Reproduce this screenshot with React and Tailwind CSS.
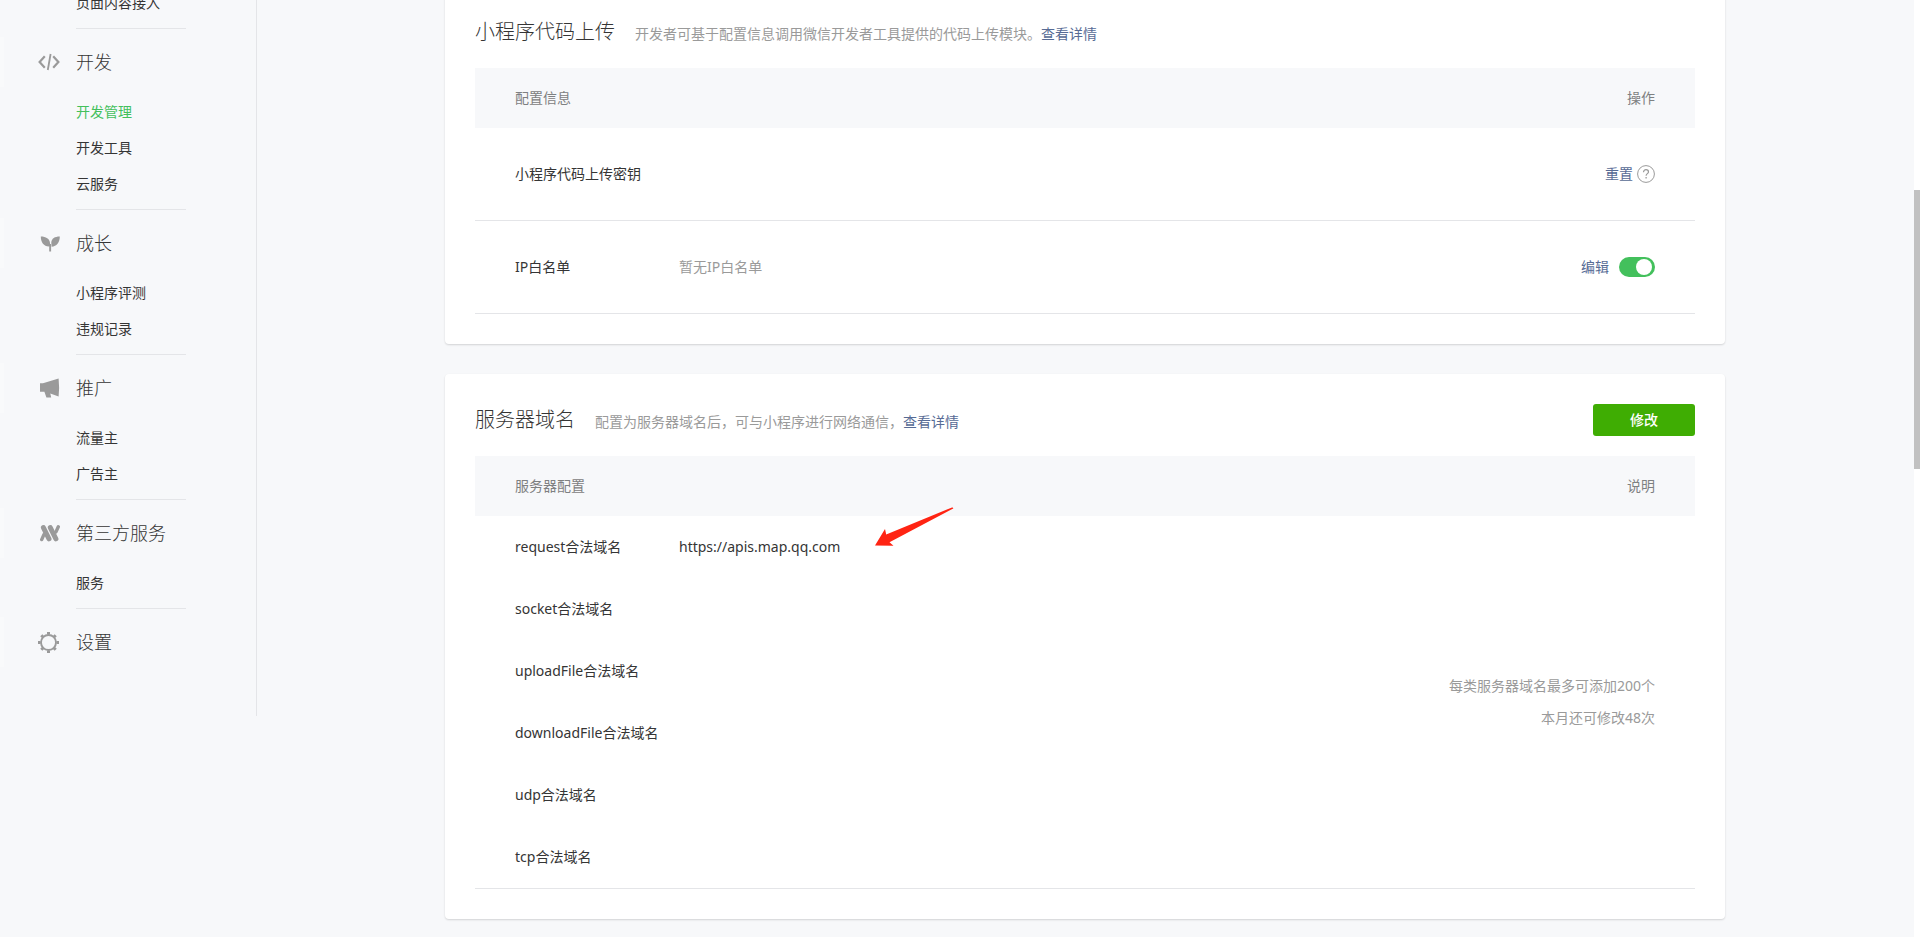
import React, { useState } from 'react';

const MENU = [
  {
    title: '开发',
    icon: CodeIcon,
    items: ['开发管理', '开发工具', '云服务'],
  },
  {
    title: '成长',
    icon: SproutIcon,
    items: ['小程序评测', '违规记录'],
  },
  {
    title: '推广',
    icon: MegaphoneIcon,
    items: ['流量主', '广告主'],
  },
  {
    title: '第三方服务',
    icon: ServiceIcon,
    items: ['服务'],
  },
  {
    title: '设置',
    icon: GearIcon,
    items: [],
  },
];

const DOMAINS = [
  { label: 'request合法域名', value: 'https://apis.map.qq.com' },
  { label: 'socket合法域名', value: '' },
  { label: 'uploadFile合法域名', value: '' },
  { label: 'downloadFile合法域名', value: '' },
  { label: 'udp合法域名', value: '' },
  { label: 'tcp合法域名', value: '' },
];

function CodeIcon() {
  return (
    <svg width="22" height="22" viewBox="0 0 22 22" fill="none" stroke="#9a9a9a" strokeWidth="2.2" aria-hidden="true">
      <path d="M6.8 5.2 1.600 11l5.2 5.8M15.2 5.2l5.2 5.8-5.2 5.8" />
      <path strokeWidth="1.800" d="M12.6 3 9.8 19" />
    </svg>
  );
}

function SproutIcon() {
  return (
    <svg width="22" height="22" viewBox="0 0 22 22" fill="#9a9a9a" aria-hidden="true">
      <path d="M2.8 4.500c5 0 9 2.200 9.200 6.500l.2 3.300C6.500 15.100 2.800 11 2.800 4.500z" />
      <path d="M21.800 4.500c-5 0-8.300 2-8.500 6l.3 4.200c5-.2 8.200-4.200 8.200-10.200z" />
      <path d="M11.200 12h1.900v7.500h-1.900z" />
    </svg>
  );
}

function MegaphoneIcon() {
  return (
    <svg width="22" height="22" viewBox="0 0 22 22" fill="#9a9a9a" aria-hidden="true">
      <path d="M2 6.200h3L20.600 1.600q1 9 0 18l-8.300-3 .9 4H8.400l-2-5.800H2z" />
    </svg>
  );
}

function ServiceIcon() {
  return (
    <svg
      width="22"
      height="22"
      viewBox="0 0 22 22"
      fill="none"
      stroke="#9a9a9a"
      strokeWidth="5"
      strokeLinecap="round"
      aria-hidden="true"
    >
      <path d="m5.400 5.600 5.600 11.200M12.300 5.600l5.600 11.200" />
      <path strokeWidth="3.400" d="m3.700 17.600 2.300-5.200M20.300 4.800 18 9.900" />
    </svg>
  );
}

function GearIcon() {
  return (
    <svg width="22" height="22" viewBox="0 0 22 22" fill="none" stroke="#9a9a9a" aria-hidden="true">
      <circle cx="10.500" cy="11.500" r="7.500" strokeWidth="1.900" />
      <path
        strokeWidth="3"
        d="M10.500 1v2.500M10.500 19.500V22M0 11.500h2.500M18.500 11.500H21M3.300 4.300 5 6M16 17l1.700 1.700M3.300 18.700 5 17M16 6l1.700-1.700"
      />
    </svg>
  );
}

function HelpIcon() {
  return (
    <svg width="18" height="18" viewBox="0 0 18 18" fill="none" stroke="#9a9a9a" aria-hidden="true">
      <circle cx="9" cy="9" r="8.400" />
      <path strokeWidth="1.200" d="M6.500 7.200C6.500 5.600 7.600 4.700 9 4.700s2.500.9 2.500 2.200c0 1.600-2.400 1.900-2.400 3.800" />
      <path strokeWidth="1.300" d="M9.100 12v1.400" />
    </svg>
  );
}

function Sidebar() {
  return (
    <aside className="-mt-[15px] w-[257px] shrink-0 self-start border-r border-[#e4e5e8] pb-[42px]">
      <nav>
        <a href="#content" className="ml-[76px] block text-sm leading-9">
          页面内容接入
        </a>
        {MENU.map(({ title, icon: Icon, items }) => (
          <section key={title} className="pt-[7px]">
            <div className="ml-[76px] w-[110px] border-t border-[#e4e5e8]" />
            <h2 className="mt-2 mb-[7px] flex h-[50px] items-center gap-4 border-l-4 border-[#f9fafb] pl-[34px] text-lg font-light">
              <Icon />
              {title}
            </h2>
            <ul className="ml-[76px] text-sm leading-9">
              {items.map((item) => (
                <li key={item}>
                  <a href={`#${item}`} className={item === '开发管理' ? 'text-[#43c05c]' : ''}>
                    {item}
                  </a>
                </li>
              ))}
            </ul>
          </section>
        ))}
      </nav>
    </aside>
  );
}

function CardHeader({ title, desc, children }) {
  return (
    <div className="mb-5 flex h-8 items-center justify-between">
      <div className="flex items-baseline gap-5 pt-[2px]">
        <h3 className="text-xl leading-8 font-light">{title}</h3>
        <p className="text-sm leading-8 text-[#9a9a9a]">
          {desc}
          <a href="#detail" className="text-[#576b95]">查看详情</a>
        </p>
      </div>
      {children}
    </div>
  );
}

function UploadCard() {
  const [whitelist, setWhitelist] = useState(true);

  return (
    <section className="-mt-[14px] rounded bg-white p-[30px] shadow-[0_1px_2px_rgba(0,0,0,0.15)]">
      <CardHeader title="小程序代码上传" desc="开发者可基于配置信息调用微信开发者工具提供的代码上传模块。" />
      <table className="w-full table-fixed border-separate border-spacing-0 text-sm">
        <thead>
          <tr className="h-[60px] bg-[#f7f8fa] text-[#7e8081]">
            <th className="w-[204px] pl-10 text-left font-normal">配置信息</th>
            <th />
            <th className="w-[300px] pr-10 text-right font-normal">操作</th>
          </tr>
        </thead>
        <tbody>
          <tr className="h-[93px]">
            <td className="border-b border-[#e4e5e8] pl-10 whitespace-nowrap">小程序代码上传密钥</td>
            <td className="border-b border-[#e4e5e8]" />
            <td className="border-b border-[#e4e5e8] pr-10">
              <div className="flex items-center justify-end gap-1">
                <a href="#reset" className="text-[#576b95]">重置</a>
                <HelpIcon />
              </div>
            </td>
          </tr>
          <tr className="h-[93px]">
            <td className="border-b border-[#e4e5e8] pl-10">IP白名单</td>
            <td className="border-b border-[#e4e5e8] text-[#9a9a9a]">暂无IP白名单</td>
            <td className="border-b border-[#e4e5e8] pr-10">
              <div className="flex items-center justify-end gap-[10px]">
                <a href="#edit" className="text-[#576b95]">编辑</a>
                <input
                  type="checkbox"
                  role="switch"
                  aria-label="IP白名单"
                  checked={whitelist}
                  onChange={(e) => setWhitelist(e.target.checked)}
                  className="flex h-5 w-9 cursor-pointer appearance-none items-center rounded-full bg-gray-300 px-[3px] before:h-4 before:w-4 before:rounded-full before:bg-white checked:justify-end checked:bg-[#43c05c]"
                />
              </div>
            </td>
          </tr>
        </tbody>
      </table>
    </section>
  );
}

function RedArrow() {
  return (
    <svg
      className="absolute -top-[10px] left-[195px]"
      width="80"
      height="42"
      viewBox="0 0 80 42"
      fill="#ff2413"
      aria-hidden="true"
    >
      <path d="M1 39.500 11 23l1.200 5.500L78 1.400q1.500-.2 1.200 1.200L15.500 36.200l4 3.600z" />
    </svg>
  );
}

function DomainCard() {
  return (
    <section className="rounded bg-white p-[30px] shadow-[0_1px_2px_rgba(0,0,0,0.15)]">
      <CardHeader title="服务器域名" desc="配置为服务器域名后，可与小程序进行网络通信，">
        <button type="button" className="h-8 w-[102px] rounded-[3px] bg-[#3fad03] text-sm font-medium text-white">
          修改
        </button>
      </CardHeader>
      <table className="w-full table-fixed border-separate border-spacing-0 border-b border-[#e4e5e8] text-sm">
        <thead>
          <tr className="h-[60px] bg-[#f7f8fa] text-[#7e8081]">
            <th className="w-[204px] pl-10 text-left font-normal">服务器配置</th>
            <th />
            <th className="w-[300px] pr-10 text-right font-normal">说明</th>
          </tr>
        </thead>
        <tbody>
          {DOMAINS.map((row, i) => (
            <tr key={row.label} className="h-[62px]">
              <td className="pl-10 whitespace-nowrap">{row.label}</td>
              <td className="relative">
                {row.value}
                {row.value && <RedArrow />}
              </td>
              {i === 0 && (
                <td rowSpan={DOMAINS.length} className="pr-10 text-right leading-8 text-[#9a9a9a]">
                  <p>每类服务器域名最多可添加200个</p>
                  <p>本月还可修改48次</p>
                </td>
              )}
            </tr>
          ))}
        </tbody>
      </table>
    </section>
  );
}

export default function App() {
  return (
    <div className="flex min-h-screen overflow-hidden bg-[#f7f8fa] pr-[7px] font-['Noto_Sans','Noto_Sans_CJK_SC',sans-serif] text-[#353535]">
      <Sidebar />
      <main className="min-w-0 flex-1">
        <div className="mx-auto flex max-w-[1280px] flex-col gap-[30px]">
          <UploadCard />
          <DomainCard />
        </div>
      </main>

      {/* Scrollbar */}
      <div className="fixed inset-y-0 right-0 w-[6px] bg-white pt-[190px]">
        <div className="h-[279px] bg-[#c1c1c1]" />
      </div>
    </div>
  );
}
